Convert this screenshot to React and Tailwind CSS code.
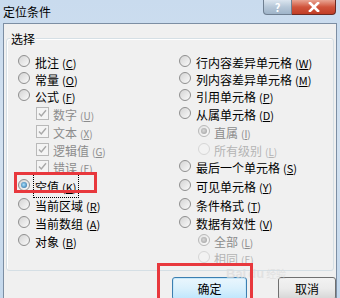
import React from "react";

const heights = ["h-[17px]", "h-[17px]", "h-[18px]", "h-[18px]", "h-[18px]", "h-[17px]", "h-[19px]", "h-[19px]", "h-[18px]", "h-[18px]", "h-[17px]", "h-[17px]"];

const left = [
  { t: "radio", label: "批注", k: "C" },
  { t: "radio", label: "常量", k: "O" },
  { t: "radio", label: "公式", k: "F" },
  { t: "check", label: "数字", k: "U" },
  { t: "check", label: "文本", k: "X" },
  { t: "check", label: "逻辑值", k: "G" },
  { t: "check", label: "错误", k: "E" },
  { t: "radio", label: "空值", k: "K", sel: true, focus: true },
  { t: "radio", label: "当前区域", k: "R" },
  { t: "radio", label: "当前数组", k: "A" },
  { t: "radio", label: "对象", k: "B" },
];

const right = [
  { t: "radio", label: "行内容差异单元格", k: "W" },
  { t: "radio", label: "列内容差异单元格", k: "M" },
  { t: "radio", label: "引用单元格", k: "P" },
  { t: "radio", label: "从属单元格", k: "D" },
  { t: "sub", label: "直属", k: "I", sel: true },
  { t: "sub", label: "所有级别", k: "L", faint: true },
  { t: "radio", label: "最后一个单元格", k: "S" },
  { t: "radio", label: "可见单元格", k: "Y" },
  { t: "radio", label: "条件格式", k: "T" },
  { t: "radio", label: "数据有效性", k: "V" },
  { t: "sub", label: "全部", k: "L", sel: true },
  { t: "sub", label: "相同", k: "E", faint: true },
];

function Radio({ sel, disabled, faint }) {
  return (
    <span
      className={
        "flex h-[12px] w-[12px] shrink-0 items-center justify-center rounded-full border " +
        (faint
          ? "border-[#d6d6d6] bg-[#f2f2f2]"
          : disabled
          ? "border-[#b8b8b8] bg-gradient-to-br from-[#e4e4e4] to-[#fbfbfb]"
          : "border-[#8f8f8f] bg-gradient-to-br from-[#d4d4d4] to-[#fafafa]")
      }
    >
      {sel && (
        <span
          className={
            "block h-[6px] w-[6px] rounded-full " +
            (disabled
              ? "bg-[radial-gradient(circle_at_45%_45%,#d8d8d8,#9a9a9a)]"
              : "bg-[radial-gradient(circle_at_45%_45%,#a9e2ff,#1c5f96)]")
          }
        />
      )}
    </span>
  );
}

function Check() {
  return (
    <span className="flex h-[13px] w-[13px] shrink-0 items-center justify-center border border-[#b9b9b9] bg-[#f4f4f4]">
      <svg width="9" height="9" viewBox="0 0 9 9">
        <path d="M1 4.5 L3.3 7 L8 1.2" fill="none" stroke="#a8a8a8" strokeWidth="1.4" />
      </svg>
    </span>
  );
}

function Label({ label, k, gray, faint }) {
  const c = faint ? "text-[#b4b4b4]" : gray ? "text-[#8c8c8c]" : "text-black";
  return (
    <span className={"whitespace-nowrap text-[12px] leading-[15px] " + c}>
      {label}
      <span className={"ml-[3px] " + (gray || faint ? "text-[10px]" : "text-[11px]")}>
        (<span className="underline underline-offset-1">{k}</span>)
      </span>
    </span>
  );
}

function Cell({ item, side }) {
  if (!item) return <div />;
  if (item.t === "check") {
    return (
      <div className="flex items-center pl-[29px]">
        <Check />
        <span className="ml-[4px]">
          <Label label={item.label} k={item.k} gray />
        </span>
      </div>
    );
  }
  if (item.t === "sub") {
    return (
      <div className="flex items-center pl-[25px]">
        <Radio sel={item.sel} disabled faint={item.faint} />
        <span className="ml-[4px]">
          <Label label={item.label} k={item.k} gray={!item.faint} faint={item.faint} />
        </span>
      </div>
    );
  }
  return (
    <div className={"flex items-center " + (side === "l" ? "pl-[11px]" : "pl-[6px]")}>
      <Radio sel={item.sel} />
      <span
        className={
          "ml-[4px] px-[1px] " + (item.focus ? "outline outline-1 outline-dotted outline-black" : "")
        }
      >
        <Label label={item.label} k={item.k} />
      </span>
    </div>
  );
}

export default function App() {
  return (
    <div className="relative h-[298px] w-[340px] overflow-hidden bg-gradient-to-b from-[#c9dbee] via-[#d3e2f1] to-[#c4d8ec] font-['Noto_Sans_CJK_SC','Noto_Sans',sans-serif]">
      {/* title bar */}
      <div className="flex h-[23px] items-start">
        <div className="pl-[3px] pt-[3px] text-[12px] leading-[17px] text-black">定位条件</div>
        <div className="ml-auto mr-[4px] flex">
          <div className="flex h-[15px] w-[29px] items-center justify-center rounded-bl-[4px] border border-t-0 border-[#6f7f91] bg-gradient-to-b from-[#dbe5ef] via-[#b6c7d8] to-[#9fb4c9] text-[11px] font-bold leading-none text-white">
            ?
          </div>
          <div className="flex h-[15px] w-[44px] items-center justify-center rounded-br-[4px] border border-l-0 border-t-0 border-[#6b2a22] bg-gradient-to-b from-[#e8a493] via-[#d0543c] to-[#c13d25]">
            <svg width="12" height="10" viewBox="0 0 12 10">
              <path d="M2 1 L10 9 M10 1 L2 9" stroke="#ffffff" strokeWidth="2.6" strokeLinecap="square" />
            </svg>
          </div>
        </div>
      </div>
      {/* client */}
      <div className="ml-[3px] mr-[3px] h-[275px] border-l border-t border-r border-[#7c8ea3] bg-[#f0f0f0] pt-[14px]">
        <div className="relative ml-[2px] mr-[2px] h-[233px] rounded-[3px] border border-[#d5dfe5] pt-[10px] shadow-[inset_1px_1px_0_#ffffff]">
          <span className="absolute left-[3px] top-[-9px] bg-[#f0f0f0] px-[1px] text-[12px] leading-[17px] text-black">
            选择
          </span>
          <div className="grid grid-cols-[166px_1fr]">
            {heights.map((h, i) => (
              <React.Fragment key={i}>
                <div className={h}>
                  <Cell item={left[i]} side="l" />
                </div>
                <div className={h}>
                  <Cell item={right[i]} side="r" />
                </div>
              </React.Fragment>
            ))}
          </div>
        </div>
        <div className="mt-[6px] flex pl-[168px]">
          <button className="h-[23px] w-[75px] rounded-[3px] border border-[#3c7fb1] bg-gradient-to-b from-[#eaf6fd] via-[#d9f0fc] to-[#bee6fd] text-[12px] text-black shadow-[inset_0_0_0_1px_#c7e8fa]">
            确定
          </button>
          <button className="ml-[31px] h-[23px] w-[58px] rounded-[3px] border border-[#707070] bg-gradient-to-b from-[#f2f2f2] via-[#ebebeb] to-[#d6d6d6] text-[12px] text-black">
            取消
          </button>
        </div>
      </div>
      {/* faint watermark */}
      <div className="pointer-events-none absolute left-[226px] top-[268px] flex items-end gap-[2px] font-['Liberation_Sans',sans-serif] text-[13px] font-bold leading-[11px] text-[#dcdcdc] opacity-70">
        <span>Bai</span>
        <span>du</span>
        <span className="font-['Noto_Sans_CJK_SC',sans-serif] text-[10px] font-normal leading-[11px]">经验</span>
      </div>
      {/* annotation highlights */}
      <div className="pointer-events-none absolute left-[14px] top-[172px] h-[21px] w-[83px] border-[3px] border-[#e8383d]" />
      <div className="pointer-events-none absolute left-[157px] top-[263px] h-[40px] w-[96px] border-[3px] border-[#e8383d]" />
    </div>
  );
}
